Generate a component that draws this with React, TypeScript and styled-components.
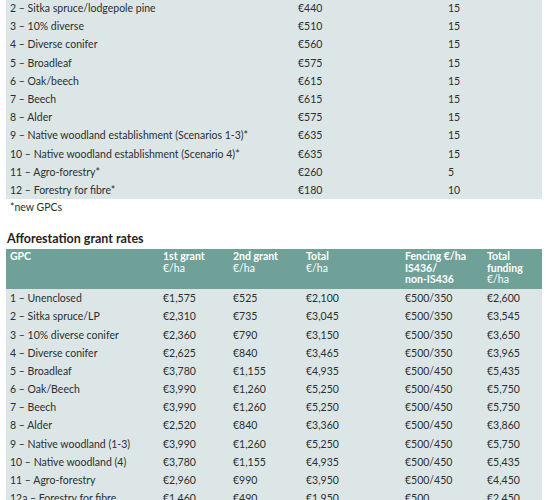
import React from "react";
import styled, { createGlobalStyle } from "styled-components";

const Global = createGlobalStyle`
  html, body { margin: 0; padding: 0; background: #ffffff; }
  body { font-family: Lato, "Open Sans", sans-serif; color: #2a2f2f; overflow: hidden; }
`;

const Page = styled.div`
  width: 550px;
  height: 500px;
  overflow: hidden;
  padding: 0 8px 0 6px;
  box-sizing: border-box;
`;

const TopTable = styled.div`
  background: #dde6e6;
  margin-top: -1px;
`;

const Row = styled.div<{ $cols: string }>`
  display: grid;
  grid-template-columns: ${(p) => p.$cols};
  height: 18.2px;
  align-items: center;
  padding-left: 4px;
  font-size: 10.5px;
  white-space: nowrap;
`;

const Cell = styled.div`
  line-height: 18px;
`;

const Note = styled.div`
  font-size: 10.5px;
  padding: 0 0 0 4px;
  height: 16px;
  line-height: 16px;
`;

const Title = styled.h2`
  margin: 17px 0 0 1px;
  font-size: 12.5px;
  font-weight: 700;
  line-height: 14px;
  color: #1f2424;
`;

const GrantTable = styled.div`
  background: #dde6e6;
  margin-top: 3px;
`;

const Header = styled.div<{ $cols: string }>`
  display: grid;
  grid-template-columns: ${(p) => p.$cols};
  background: #6fa199;
  color: #ffffff;
  padding: 2px 0 0 4px;
  height: 40px;
  box-sizing: border-box;
  font-size: 10.5px;
  line-height: 11.5px;
  font-weight: 700;
`;

const HeadLine = styled.div<{ $light?: boolean }>`
  font-weight: ${(p) => (p.$light ? 400 : 700)};
`;

const topCols = "288px 150px 1fr";
const grantCols = "153px 70px 73px 99px 82px 1fr";

const topRows: [string, string, string][] = [
  ["2 – Sitka spruce/lodgepole pine", "€440", "15"],
  ["3 – 10% diverse", "€510", "15"],
  ["4 – Diverse conifer", "€560", "15"],
  ["5 – Broadleaf", "€575", "15"],
  ["6 – Oak/beech", "€615", "15"],
  ["7 – Beech", "€615", "15"],
  ["8 – Alder", "€575", "15"],
  ["9 – Native woodland establishment (Scenarios 1-3)*", "€635", "15"],
  ["10 – Native woodland establishment (Scenario 4)*", "€635", "15"],
  ["11 – Agro-forestry*", "€260", "5"],
  ["12 – Forestry for fibre*", "€180", "10"],
];

const grantRows: string[][] = [
  ["1 – Unenclosed", "€1,575", "€525", "€2,100", "€500/350", "€2,600"],
  ["2 – Sitka spruce/LP", "€2,310", "€735", "€3,045", "€500/350", "€3,545"],
  ["3 – 10% diverse conifer", "€2,360", "€790", "€3,150", "€500/350", "€3,650"],
  ["4 – Diverse conifer", "€2,625", "€840", "€3,465", "€500/350", "€3,965"],
  ["5 – Broadleaf", "€3,780", "€1,155", "€4,935", "€500/450", "€5,435"],
  ["6 – Oak/Beech", "€3,990", "€1,260", "€5,250", "€500/450", "€5,750"],
  ["7 – Beech", "€3,990", "€1,260", "€5,250", "€500/450", "€5,750"],
  ["8 – Alder", "€2,520", "€840", "€3,360", "€500/450", "€3,860"],
  ["9 – Native woodland (1-3)", "€3,990", "€1,260", "€5,250", "€500/450", "€5,750"],
  ["10 – Native woodland (4)", "€3,780", "€1,155", "€4,935", "€500/450", "€5,435"],
  ["11 – Agro-forestry", "€2,960", "€990", "€3,950", "€500/450", "€4,450"],
  ["12a – Forestry for fibre", "€1,460", "€490", "€1,950", "€500", "€2,450"],
];

const headers: { bold: string[]; light?: string }[] = [
  { bold: ["GPC"] },
  { bold: ["1st grant"], light: "€/ha" },
  { bold: ["2nd grant"], light: "€/ha" },
  { bold: ["Total"], light: "€/ha" },
  { bold: ["Fencing €/ha", "IS436/", "non-IS436"] },
  { bold: ["Total", "funding"], light: "€/ha" },
];

export default function App() {
  return (
    <Page>
      <Global />
      <TopTable>
        {topRows.map((r, i) => (
          <Row key={i} $cols={topCols}>
            {r.map((c, j) => (
              <Cell key={j}>{c}</Cell>
            ))}
          </Row>
        ))}
      </TopTable>
      <Note>*new GPCs</Note>
      <Title>Afforestation grant rates</Title>
      <GrantTable>
        <Header $cols={grantCols}>
          {headers.map((h, i) => (
            <div key={i}>
              {h.bold.map((b, k) => (
                <HeadLine key={k}>{b}</HeadLine>
              ))}
              {h.light && <HeadLine $light>{h.light}</HeadLine>}
            </div>
          ))}
        </Header>
        {grantRows.map((r, i) => (
          <Row key={i} $cols={grantCols}>
            {r.map((c, j) => (
              <Cell key={j}>{c}</Cell>
            ))}
          </Row>
        ))}
      </GrantTable>
    </Page>
  );
}
